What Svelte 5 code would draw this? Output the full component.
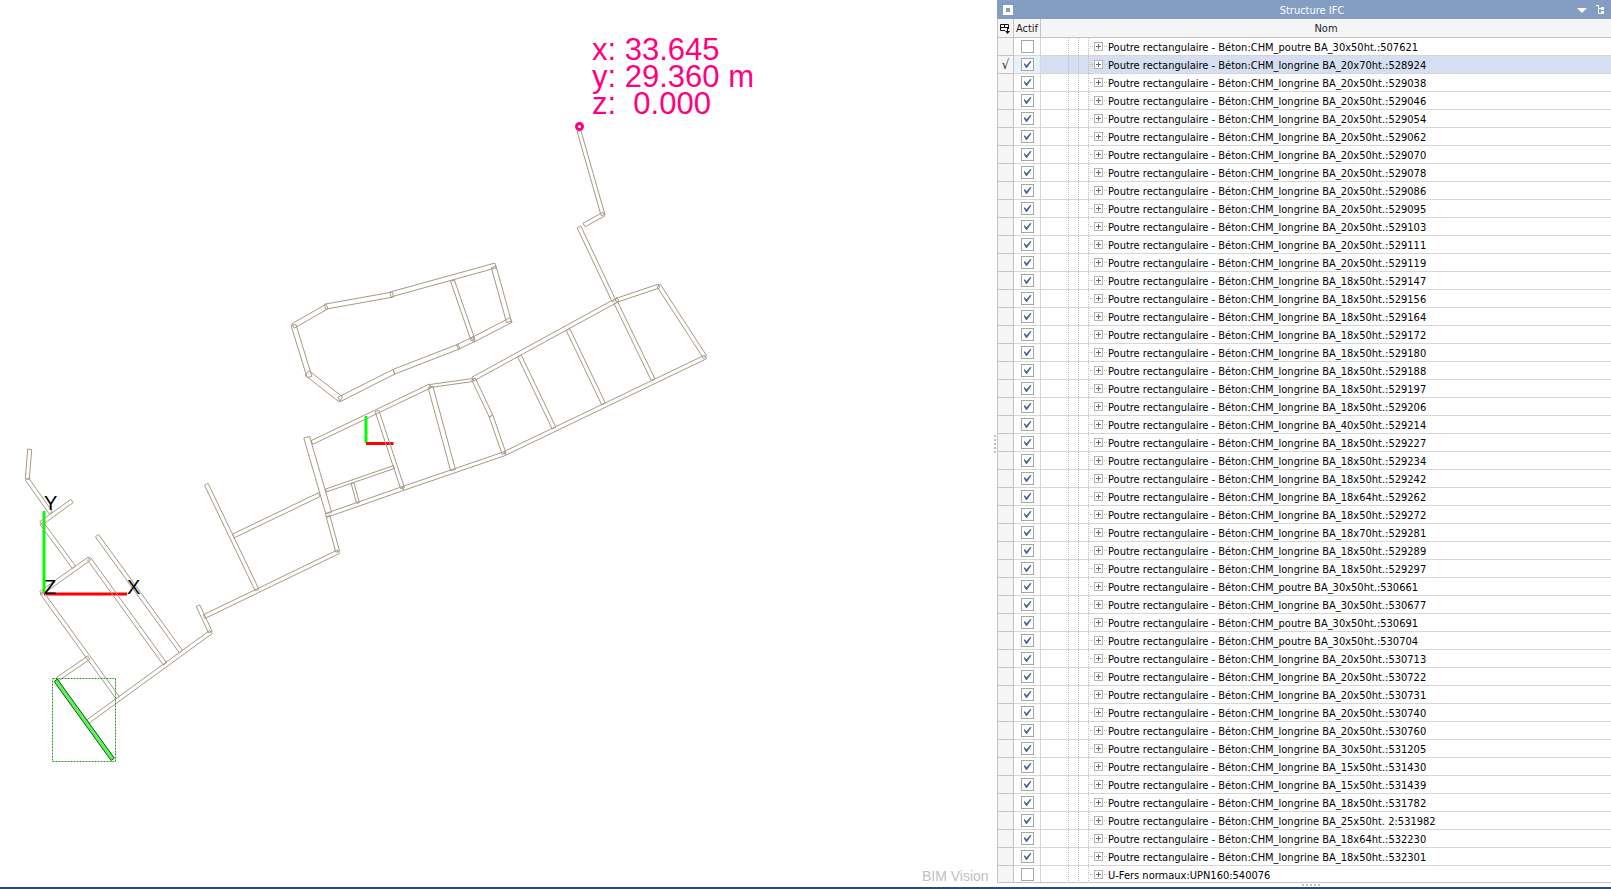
<script>
    const prefix = 'Poutre rectangulaire - Béton:CHM_'

    // beam type, section, element id
    const elements = [
        ['poutre', '30x50', 507621], ['longrine', '20x70', 528924],
        ['longrine', '20x50', 529038], ['longrine', '20x50', 529046],
        ['longrine', '20x50', 529054], ['longrine', '20x50', 529062],
        ['longrine', '20x50', 529070], ['longrine', '20x50', 529078],
        ['longrine', '20x50', 529086], ['longrine', '20x50', 529095],
        ['longrine', '20x50', 529103], ['longrine', '20x50', 529111],
        ['longrine', '20x50', 529119], ['longrine', '18x50', 529147],
        ['longrine', '18x50', 529156], ['longrine', '18x50', 529164],
        ['longrine', '18x50', 529172], ['longrine', '18x50', 529180],
        ['longrine', '18x50', 529188], ['longrine', '18x50', 529197],
        ['longrine', '18x50', 529206], ['longrine', '40x50', 529214],
        ['longrine', '18x50', 529227], ['longrine', '18x50', 529234],
        ['longrine', '18x50', 529242], ['longrine', '18x64', 529262],
        ['longrine', '18x50', 529272], ['longrine', '18x70', 529281],
        ['longrine', '18x50', 529289], ['longrine', '18x50', 529297],
        ['poutre', '30x50', 530661], ['longrine', '30x50', 530677],
        ['poutre', '30x50', 530691], ['poutre', '30x50', 530704],
        ['longrine', '20x50', 530713], ['longrine', '20x50', 530722],
        ['longrine', '20x50', 530731], ['longrine', '20x50', 530740],
        ['longrine', '20x50', 530760], ['longrine', '30x50', 531205],
        ['longrine', '15x50', 531430], ['longrine', '15x50', 531439],
        ['longrine', '18x50', 531782], ['longrine', '25x50', 531982, ' 2'],
        ['longrine', '18x64', 532230], ['longrine', '18x50', 532301]
    ]

    let rows = $state([
        ...elements.map(([type, section, id, suffix = '']) => ({
            id,
            name: `${prefix}${type} BA_${section}ht.${suffix}:${id}`,
            active: id !== 507621
        })),
        { id: 540076, name: 'U-Fers normaux:UPN160:540076', active: false }
    ])
    let selected = $state(528924)

    // centre line of each beam: x1, y1, x2, y2, width
    const beams = [
        [579, 131, 603, 215, 4], [604, 214, 584, 225, 4], [579, 227, 614, 301, 4],
        [616, 300.5, 659, 286, 4], [658.7, 285.5, 705, 357, 4], [705.5, 357, 505, 453.3, 4],
        [616, 303, 653, 379.5, 4], [618, 299.5, 473, 379, 4], [568, 329.5, 603.5, 404, 4],
        [519.5, 356, 554, 428, 4], [473.5, 379, 491, 416, 4], [491, 416, 504, 453.5, 4],
        [473, 380, 430, 386, 3], [430.5, 387, 453, 470, 5], [505, 453.5, 403, 488.5, 4],
        [403, 488.5, 326, 515.5, 4], [430, 386, 312, 442.5, 4], [377, 411, 402.5, 488, 4],
        [306.7, 437.3, 328.7, 513, 6], [326, 490.5, 394, 467, 3], [352.5, 483, 358, 503, 3],
        [328, 516, 337.7, 551.7, 4], [338.5, 551.7, 204, 616.7, 4], [319.3, 494.7, 233.3, 536, 4],
        [206.3, 484.3, 257, 590, 4], [198, 605.7, 210.3, 632, 4], [211, 632, 87.3, 722, 4],
        [97, 535.7, 181, 651.7, 4], [89, 558.7, 165, 664, 4], [89.5, 558.5, 41, 593, 4],
        [41.7, 592.7, 117.7, 697.7, 4], [88.7, 657.7, 57.7, 679, 4], [41.7, 523.3, 74, 567.3, 4],
        [41, 523.3, 72, 501, 4], [27, 479, 50.7, 512.7, 4], [29.7, 449.3, 27.3, 479, 4],
        [293, 326, 327, 306.5, 5], [325, 306.7, 393, 294.5, 5], [390.5, 294.5, 495.5, 265.5, 5],
        [493.7, 267, 509, 322, 5], [511, 320, 472.5, 340, 5], [474, 339, 457.5, 347, 5],
        [459, 346.5, 394, 371.7, 5], [394, 371.7, 339, 399.5, 5], [307, 373, 341, 399.5, 6],
        [293.5, 325, 309.5, 377, 5], [452.5, 280.7, 473, 340, 4]
    ]

    function outline([x1, y1, x2, y2, width]) {
        const length = Math.hypot(x2 - x1, y2 - y1)
        const nx = (-(y2 - y1) / length) * (width / 2)
        const ny = ((x2 - x1) / length) * (width / 2)
        return [
            [x1 + nx, y1 + ny],
            [x2 + nx, y2 + ny],
            [x2 - nx, y2 - ny],
            [x1 - nx, y1 - ny]
        ].map((point) => point.map((n) => n.toFixed(1)).join(',')).join(' ')
    }
</script>

<div class="app">
    <div class="workspace">
        <main class="viewport">
            <svg class="plan" viewBox="0 0 993 887" preserveAspectRatio="xMinYMin meet" role="img" aria-label="Plan">
                <g class="axis">
                    <path class="axis-y" d="M44 511V594" />
                    <path class="axis-x" d="M44 594H127" />
                    <path class="axis-y" d="M366 416V443" />
                    <path class="axis-x" d="M366 443.5H393.5" />
                </g>
                <g class="beams">
                    {#each beams as beam}
                        <polygon points={outline(beam)} />
                    {/each}
                </g>
                <polygon class="picked" points={outline([55.7, 680.3, 112.7, 759.3, 4])} />
                <rect class="bounds" x="52.5" y="678.5" width="63" height="83" />
                <g class="axis-labels">
                    <text x="44" y="510">Y</text>
                    <text x="44" y="594">Z</text>
                    <text x="127" y="594">X</text>
                </g>
                <circle class="probe" cx="579.5" cy="126.5" r="3" />
                <g class="coordinates">
                    <text x="592" y="60">x: 33.645</text>
                    <text x="592" y="87">y: 29.360 m</text>
                    <text x="592" y="114">z: &nbsp;0.000</text>
                </g>
                <text class="brand" x="922" y="881">BIM Vision</text>
            </svg>
        </main>

        <div class="splitter vertical"><span class="grip"></span></div>

        <aside class="panel">
            <header class="panel-title">
                <button class="tool" aria-label="Panneau">
                    <svg width="10" height="10" viewBox="0 0 10 10"><path fill="#fff" fill-rule="evenodd" d="M0 0H10V10H0ZM3 3V7H7V3Z" /></svg>
                </button>
                <h2>Structure IFC</h2>
                <div class="tools">
                    <button class="tool" aria-label="Menu">
                        <svg width="10" height="10" viewBox="0 0 10 10"><path fill="#fff" d="M0 3H10L5 8Z" /></svg>
                    </button>
                    <button class="tool" aria-label="Arborescence">
                        <svg width="10" height="10" viewBox="0 0 10 10">
                            <path fill="none" stroke="#fff" d="M0 .5H3M2.500 0V8.500H5M2.500 3.500H5" />
                            <path fill="#fff" d="M5 2H8V5H5ZM5 6H8V9H5Z" />
                        </svg>
                    </button>
                </div>
            </header>

            <div class="tree">
                <table>
                    <colgroup>
                        <col class="col-mark" />
                        <col class="col-active" />
                        <col />
                    </colgroup>
                    <thead>
                        <tr>
                            <th>
                                <button class="tool columns" aria-label="Colonnes">
                                    <svg width="11" height="10" viewBox="0 0 11 10">
                                        <path fill="none" stroke="#111" d="M5 6.500H.5V.5H8.500V5M0 3.500H9M4.500 0V4" />
                                        <path fill="#111" d="M7 4H8V7H10L7.500 10L5 7H7Z" />
                                    </svg>
                                </button>
                            </th>
                            <th>Actif</th>
                            <th>Nom</th>
                        </tr>
                    </thead>
                    <tbody>
                        {#each rows as row (row.id)}
                            <tr class:selected={row.id === selected} onclick={() => (selected = row.id)}>
                                <td class="mark">{row.id === selected ? '√' : ''}</td>
                                <td class="active">
                                    <input type="checkbox" bind:checked={row.active} aria-label={row.name} />
                                </td>
                                <td class="name">
                                    <div class="node">
                                        <span class="guide"></span>
                                        <span class="guide"></span>
                                        <span class="guide"></span>
                                        <span class="branch"></span>
                                        <button class="expand" aria-label="Développer"></button>
                                        <span class="branch short"></span>
                                        <span class="label">{row.name}</span>
                                    </div>
                                </td>
                            </tr>
                        {/each}
                    </tbody>
                </table>
            </div>

            <div class="splitter horizontal"><span class="grip"></span></div>
        </aside>
    </div>
    <footer class="status"></footer>
</div>

<style>
    :global(body) {
        margin: 0;
    }

    .app {
        display: flex;
        flex-direction: column;
        height: 100vh;
        overflow: hidden;
        background: #fff;
        color: #000;
        font-family: Tahoma, "DejaVu Sans Condensed", "DejaVu Sans", sans-serif;
        font-size: 11px;
    }

    .workspace {
        display: flex;
        flex: 1;
        min-height: 0;
    }

    .status {
        height: 2px;
        background: #244b85;
    }

    .viewport {
        flex: 993 1 0;
        min-width: 0;
    }

    .plan {
        display: block;
        width: 100%;
        height: 100%;
        font-family: "Liberation Sans", Arial, sans-serif;
    }

    .beams polygon {
        fill: none;
        stroke: #a69985;
        stroke-width: 1;
    }

    .axis path {
        stroke-width: 3;
    }

    .axis .axis-y {
        stroke: #0f0;
    }

    .axis .axis-x {
        stroke: #f00;
    }

    .axis-labels {
        font-size: 20px;
    }

    .picked {
        fill: #5cf35c;
        stroke: #14561a;
    }

    .bounds {
        fill: none;
        stroke: #22a022;
        stroke-dasharray: 2 1;
    }

    .probe {
        fill: #fff;
        stroke: #ff0080;
        stroke-width: 3;
    }

    .coordinates {
        fill: #ff0080;
        font-size: 31px;
    }

    .brand {
        fill: #c0c0c0;
        font-size: 14px;
    }

    .splitter {
        display: flex;
        flex: none;
        align-items: center;
        justify-content: center;
    }

    .splitter.vertical {
        width: 4px;
    }

    .splitter.horizontal {
        height: 4px;
        padding-left: 14px;
    }

    .vertical .grip {
        width: 2px;
        height: 18px;
        background: repeating-linear-gradient(#c0c0c0 0 2px, transparent 2px 4px);
    }

    .horizontal .grip {
        width: 18px;
        height: 2px;
        background: repeating-linear-gradient(90deg, #c0c0c0 0 2px, transparent 2px 4px);
    }

    .panel {
        display: flex;
        flex: 614 1 0;
        flex-direction: column;
        min-width: 0;
    }

    .panel-title {
        display: flex;
        align-items: center;
        box-sizing: border-box;
        height: 19px;
        padding: 1px 5px 0 6px;
        background: #839dc3;
        color: #fff;
    }

    /* the caption is centred over the whole bar, under the tools */
    .panel-title h2 {
        flex: 1;
        margin: 0 -34px 0 0;
        font-size: 11px;
        font-weight: normal;
        text-align: center;
    }

    .tools {
        display: flex;
        gap: 9px;
    }

    .tool {
        display: flex;
        padding: 0;
        border: 0;
        background: none;
    }

    .tool.columns {
        margin: 0 auto;
    }

    .tree {
        flex: 1;
        min-height: 0;
        overflow: hidden;
        border-bottom: 1px solid #c3c3c3;
        border-left: 1px solid #c3c3c3;
    }

    table {
        width: 100%;
        table-layout: fixed;
        border-collapse: separate;
        border-spacing: 0;
    }

    .col-mark {
        width: 16px;
    }

    .col-active {
        width: 27px;
    }

    th,
    td {
        box-sizing: border-box;
        height: 18px;
        padding: 0;
        border-right: 1px solid #d6d6d6;
        border-bottom: 1px solid #d6d6d6;
        line-height: 16px;
        white-space: nowrap;
    }

    th {
        height: 19px;
        padding-top: 2px;
        border-color: #c3c3c3;
        background: #f5f5f5;
        color: #222;
        font-weight: normal;
        text-align: center;
    }

    th:last-child,
    td:last-child {
        border-right: 0;
    }

    .mark {
        border-color: #c3c3c3;
        background: #f5f5f5;
        color: #222;
        font-size: 13px;
        text-align: center;
    }

    .selected .active {
        background: #e5f3ff;
    }

    .selected .name {
        background: #d5dff1;
    }

    input {
        display: block;
        position: relative;
        box-sizing: border-box;
        width: 13px;
        height: 13px;
        margin: 0 auto;
        border: 1px solid #a6a6a6;
        background: #fff;
        appearance: none;
    }

    input:checked::after {
        position: absolute;
        top: 2px;
        left: 2px;
        width: 8px;
        height: 7px;
        background: #4c648e;
        clip-path: polygon(0 40%, 14% 32%, 38% 62%, 84% 0, 100% 8%, 42% 100%, 32% 100%);
        content: "";
    }

    .node {
        display: flex;
        align-items: center;
        height: 17px;
        padding-left: 18px;
    }

    .guide {
        align-self: stretch;
        box-sizing: border-box;
        width: 10px;
        margin-bottom: -1px;
        background: repeating-linear-gradient(#bdbdbd 0 1px, transparent 1px 2px) right / 1px 100% no-repeat;
    }

    .branch {
        width: 5px;
        height: 1px;
        background: repeating-linear-gradient(90deg, transparent 0 1px, #bdbdbd 1px 2px);
    }

    .branch.short {
        width: 4px;
    }

    .expand {
        flex: none;
        width: 9px;
        height: 9px;
        padding: 0;
        border: 1px solid #b4b4b4;
        background:
            linear-gradient(#6b6b6b, #6b6b6b) center / 5px 1px no-repeat,
            linear-gradient(#6b6b6b, #6b6b6b) center / 1px 5px no-repeat,
            #fff;
    }

    .label {
        padding: 2px 0 0 1px;
        line-height: 15px;
    }
</style>
